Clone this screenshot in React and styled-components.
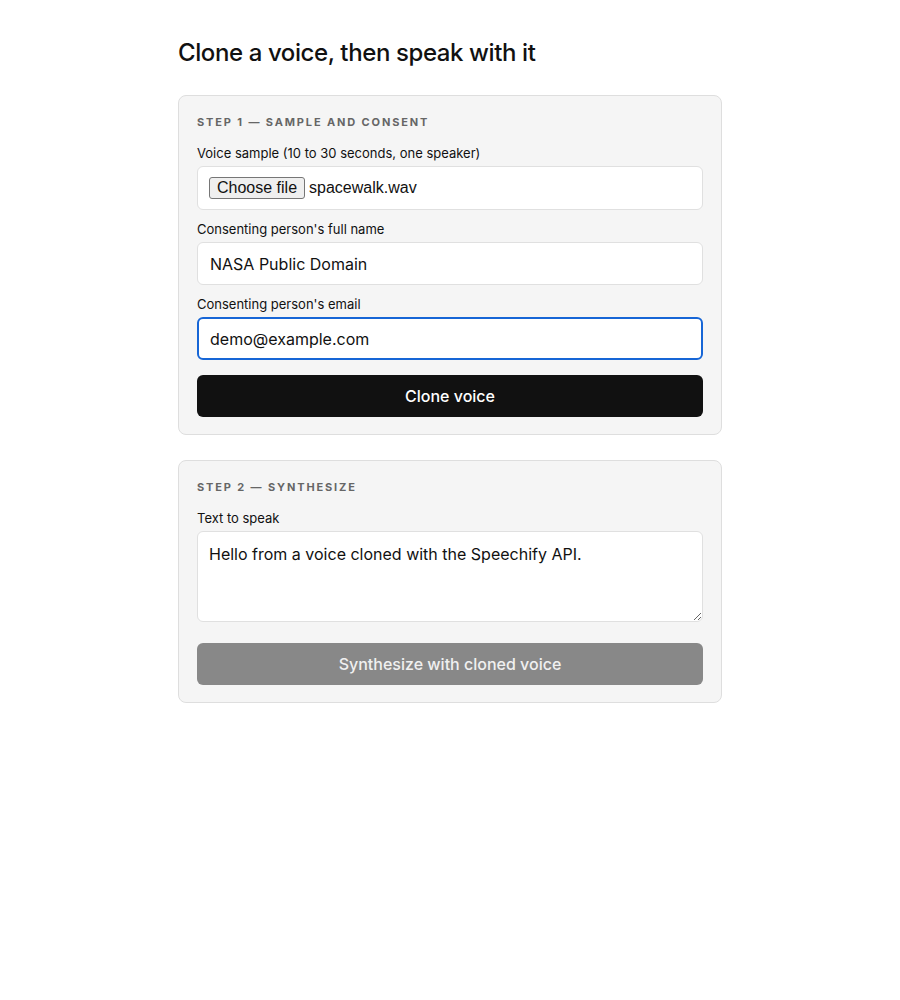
import React from "react";
import styled, { createGlobalStyle } from "styled-components";

const Global = createGlobalStyle`
  * { box-sizing: border-box; }
  body {
    margin: 0;
    background: #fff;
    color: #111;
    font-family: Inter, "Noto Sans", "Liberation Sans", sans-serif;
  }
`;

const Page = styled.main`
  max-width: 544px;
  margin: 0 auto;
  padding-top: 38px;
`;

const Title = styled.h1`
  margin: 0 0 28px;
  font-size: 24px;
  font-weight: 500;
  line-height: 29px;
  letter-spacing: -0.4px;
  color: #111;
`;

const Card = styled.section`
  background: #f5f5f5;
  border: 1px solid #dedede;
  border-radius: 8px;
  padding: 19px 18px 17px;
  margin-bottom: 25px;
  display: flex;
  flex-direction: column;
`;

const StepTitle = styled.h2`
  margin: 0 0 16px;
  font-size: 11px;
  line-height: 14px;
  font-weight: 700;
  letter-spacing: 0.17em;
  text-transform: uppercase;
  color: #666;
`;

const Field = styled.div`
  display: flex;
  flex-direction: column;
  gap: 5px;
  margin-bottom: ${(p) => p.$mb || "11px"};
`;

const Label = styled.label`
  font-size: 13px;
  line-height: 16px;
  color: #111;
`;

const inputBase = `
  width: 100%;
  background: #fff;
  border-radius: 6px;
  font-family: inherit;
  font-size: 16px;
  color: #111;
`;

const FileBox = styled.div`
  ${inputBase}
  height: 44px;
  border: 1px solid #e0e0e0;
  display: flex;
  align-items: center;
  padding: 0 11px;
  gap: 4px;
`;

const FileButton = styled.button`
  font-family: "Liberation Sans", Arial, sans-serif;
  font-size: 16px;
  height: 22px;
  padding: 0 7px;
  background: #efefef;
  border: 1px solid #767676;
  border-radius: 3px;
  color: #111;
  line-height: 20px;
`;

const FileName = styled.span`
  font-family: "Liberation Sans", Arial, sans-serif;
  font-size: 16px;
`;

const TextInput = styled.input`
  ${inputBase}
  height: 43px;
  border: ${(p) => (p.$focused ? "2px solid #1766d6" : "1px solid #e0e0e0")};
  padding: 0 ${(p) => (p.$focused ? "11px" : "12px")};
  outline: none;
`;

const TextArea = styled.textarea`
  ${inputBase}
  height: 91px;
  border: 1px solid #e0e0e0;
  padding: 12px 11px;
  line-height: 20px;
  resize: vertical;
  outline: none;
`;

const Button = styled.button`
  width: 100%;
  height: 42px;
  border: none;
  border-radius: 6px;
  background: ${(p) => (p.disabled ? "#888888" : "#111111")};
  color: ${(p) => (p.disabled ? "#f0f0f0" : "#fff")};
  font-family: inherit;
  font-size: 16px;
  font-weight: 500;
  cursor: ${(p) => (p.disabled ? "default" : "pointer")};
`;

export default function App() {
  return (
    <>
      <Global />
      <Page>
        <Title>Clone a voice, then speak with it</Title>
        <Card>
          <StepTitle>Step 1 — Sample and consent</StepTitle>
          <Field>
            <Label>Voice sample (10 to 30 seconds, one speaker)</Label>
            <FileBox>
              <FileButton type="button">Choose file</FileButton>
              <FileName>spacewalk.wav</FileName>
            </FileBox>
          </Field>
          <Field>
            <Label>Consenting person's full name</Label>
            <TextInput defaultValue="NASA Public Domain" />
          </Field>
          <Field $mb="15px">
            <Label>Consenting person's email</Label>
            <TextInput $focused defaultValue="demo@example.com" />
          </Field>
          <Button type="button">Clone voice</Button>
        </Card>
        <Card>
          <StepTitle>Step 2 — Synthesize</StepTitle>
          <Field $mb="21px">
            <Label>Text to speak</Label>
            <TextArea defaultValue="Hello from a voice cloned with the Speechify API." />
          </Field>
          <Button type="button" disabled>
            Synthesize with cloned voice
          </Button>
        </Card>
      </Page>
    </>
  );
}
